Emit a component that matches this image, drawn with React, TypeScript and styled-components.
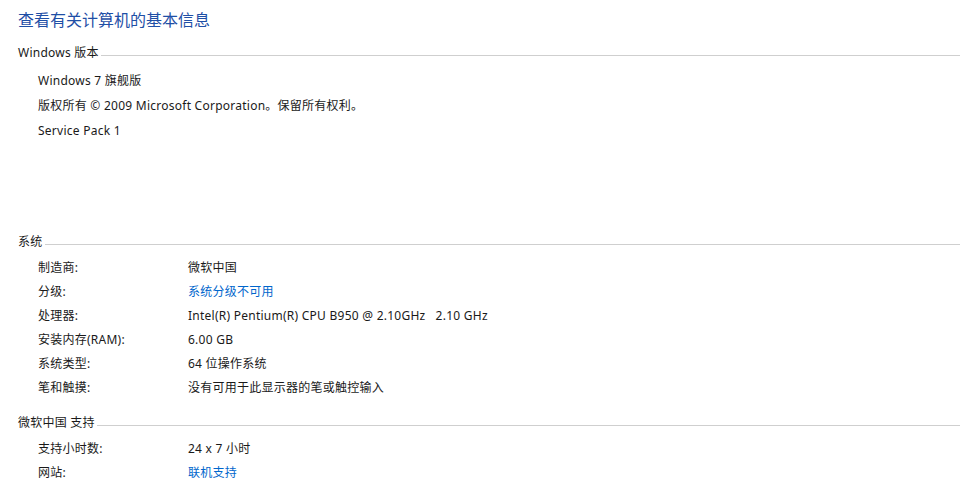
import React from 'react';
import styled, { createGlobalStyle } from 'styled-components';

// text kept as unicode escapes so the bundle reads it the same everywhere
const T = {
  title: '\u67E5\u770B\u6709\u5173\u8BA1\u7B97\u673A\u7684\u57FA\u672C\u4FE1\u606F',
  edition: 'Windows \u7248\u672C',
  win7: 'Windows 7 \u65D7\u8230\u7248',
  copyright:
    '\u7248\u6743\u6240\u6709 \u00A9 2009 Microsoft Corporation\u3002\u4FDD\u7559\u6240\u6709\u6743\u5229\u3002',
  sp: 'Service Pack 1',
  system: '\u7CFB\u7EDF',
  support: '\u5FAE\u8F6F\u4E2D\u56FD \u652F\u6301',
};

const GlobalStyle = createGlobalStyle`
  html, body {
    margin: 0;
    padding: 0;
    background: #ffffff;
  }

  body {
    font-family: 'Noto Sans', 'Noto Sans CJK SC', sans-serif;
    font-size: 12px;
    letter-spacing: 0.25px;
    color: #1a1a1a;
  }
`;

const PageStyles = styled.div`
  width: 960px;
  height: 489px;
  overflow: hidden;
  padding-left: 18px;
  box-sizing: border-box;
`;

const Title = styled.h1`
  margin: 8px 0 0;
  font-size: 16px;
  font-weight: normal;
  line-height: 24px;
  letter-spacing: 0;
  color: #1f4fa6;
`;

const SectionStyles = styled.section<{ $top: number; $minHeight?: number }>`
  margin-top: ${p => p.$top}px;
  min-height: ${p => p.$minHeight ?? 0}px;
`;

const SectionHeader = styled.div`
  display: flex;
  align-items: center;
  gap: 2px;
  height: 24px;
  white-space: nowrap;

  &::after {
    content: '';
    flex: 1;
    height: 1px;
    margin-top: 6px;
    background-color: #cfcfcf;
  }
`;

const RowList = styled.div<{ $pad: number }>`
  padding-top: ${p => p.$pad}px;
  padding-left: 20px;
`;

const Row = styled.div<{ $height: number }>`
  display: grid;
  grid-template-columns: 150px 1fr;
  height: ${p => p.$height}px;
  line-height: ${p => p.$height}px;
  white-space: pre;
`;

const Link = styled.span`
  color: #0066cc;
`;

interface InfoItem {
  label: string;
  value: string;
  link?: boolean;
}

const systemItems: InfoItem[] = [
  { label: '\u5236\u9020\u5546:', value: '\u5FAE\u8F6F\u4E2D\u56FD' },
  { label: '\u5206\u7EA7:', value: '\u7CFB\u7EDF\u5206\u7EA7\u4E0D\u53EF\u7528', link: true },
  { label: '\u5904\u7406\u5668:', value: 'Intel(R) Pentium(R) CPU B950 @ 2.10GHz   2.10 GHz' },
  { label: '\u5B89\u88C5\u5185\u5B58(RAM):', value: '6.00 GB' },
  { label: '\u7CFB\u7EDF\u7C7B\u578B:', value: '64 \u4F4D\u64CD\u4F5C\u7CFB\u7EDF' },
  {
    label: '\u7B14\u548C\u89E6\u6478:',
    value:
      '\u6CA1\u6709\u53EF\u7528\u4E8E\u6B64\u663E\u793A\u5668\u7684\u7B14\u6216\u89E6\u63A7\u8F93\u5165',
  },
];

const supportItems: InfoItem[] = [
  { label: '\u652F\u6301\u5C0F\u65F6\u6570:', value: '24 x 7 \u5C0F\u65F6' },
  { label: '\u7F51\u7AD9:', value: '\u8054\u673A\u652F\u6301', link: true },
];

function InfoRows({ items }: { items: InfoItem[] }) {
  return (
    <>
      {items.map(item => (
        <Row key={item.label} $height={24}>
          <span>{item.label}</span>
          {item.link ? <Link>{item.value}</Link> : <span>{item.value}</span>}
        </Row>
      ))}
    </>
  );
}

export default function App(): JSX.Element {
  return (
    <PageStyles>
      <GlobalStyle />
      <Title>{T.title}</Title>

      <SectionStyles $top={8} $minHeight={189}>
        <SectionHeader>{T.edition}</SectionHeader>
        <RowList $pad={4}>
          <Row $height={25}>{T.win7}</Row>
          <Row $height={25}>{T.copyright}</Row>
          <Row $height={25}>{T.sp}</Row>
        </RowList>
      </SectionStyles>

      <SectionStyles $top={0}>
        <SectionHeader>{T.system}</SectionHeader>
        <RowList $pad={3}>
          <InfoRows items={systemItems} />
        </RowList>
      </SectionStyles>

      <SectionStyles $top={10}>
        <SectionHeader>{T.support}</SectionHeader>
        <RowList $pad={3}>
          <InfoRows items={supportItems} />
        </RowList>
      </SectionStyles>
    </PageStyles>
  );
}
